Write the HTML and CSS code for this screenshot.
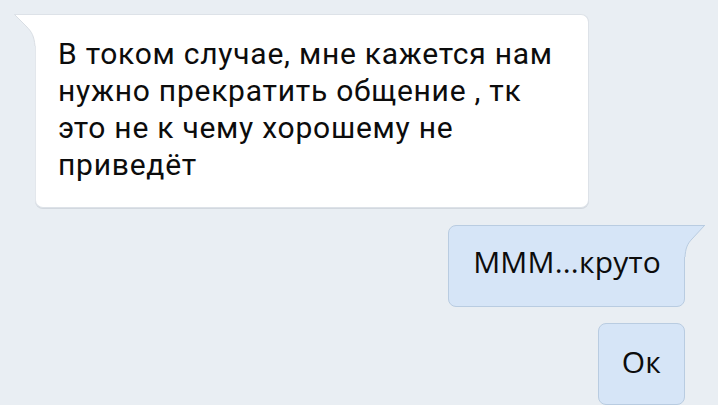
FILE: index.html
```html
<!DOCTYPE html>
<html lang="ru">
<head>
<meta charset="utf-8">
<link rel="stylesheet" href="styles.css">
</head>
<body>
<div class="chat">
  <div class="bubble in">
    <svg class="tail tail-in" width="22" height="32" viewBox="0 0 22 32">
      <path d="M0 0.5 H22 V32 H21 C20 22 18 18 12 12 L0.5 0.5 Z" fill="#ffffff"/>
      <path d="M0.5 0.5 L12 12 C18 18 20 22 21 32" fill="none" stroke="#d9dee4" stroke-width="1"/>
      <path d="M0 0.5 H22" stroke="#dde2e8" stroke-width="1"/>
    </svg>
    <p class="text roboto">В током случае, мне кажется нам<br>нужно прекратить общение , тк<br>это не к чему хорошему не<br>приведёт</p>
  </div>
  <div class="bubble out first">
    <svg class="tail tail-out" width="21" height="32" viewBox="0 0 21 32">
      <path d="M21 0.5 H0 V32 H1 C1.5 24 3 19 8 14 L20.5 0.5 Z" fill="#d6e5f7"/>
      <path d="M20.5 0.5 L8 14 C3 19 1.5 24 1 32" fill="none" stroke="#b9cce1" stroke-width="1"/>
      <path d="M0 0.5 H21" stroke="#b9cce1" stroke-width="1"/>
    </svg>
    <p class="text opensans">МММ...круто</p>
  </div>
  <div class="bubble out ok">
    <p class="text opensans">Ок</p>
  </div>
</div>
</body>
</html>
```
FILE: styles.css
```css
html, body {
  margin: 0;
  padding: 0;
  background: #e9eef3;
  overflow: hidden;
}
.chat {
  display: flex;
  flex-direction: column;
  align-items: flex-start;
  gap: 16px;
  padding: 14px 33px 0 35px;
  width: 718px;
  height: 405px;
  box-sizing: border-box;
}
.bubble {
  position: relative;
  box-sizing: border-box;
}
.text {
  margin: 0;
  color: #0c0c0c;
  white-space: nowrap;
}
.roboto {
  font-family: Roboto, "Noto Sans", sans-serif;
  font-size: 30px;
  letter-spacing: 0.75px;
  line-height: 37px;
}
.opensans {
  font-family: "Open Sans", "Noto Sans", sans-serif;
  font-size: 30px;
  letter-spacing: 0.2px;
  line-height: 40px;
}
.in {
  width: 554px;
  height: 194px;
  background: #ffffff;
  border: 1px solid #dde2e8;
  border-left-color: #e3e7ec;
  border-radius: 0 8px 8px 8px;
  box-shadow: 0 1px 0 #d2d8df;
  padding: 20px 20px 0 22px;
}
.out {
  align-self: flex-end;
  background: #d6e5f7;
  border: 1px solid #b9cce1;
  height: 82px;
}
.first {
  border-radius: 8px 0 8px 8px;
  padding: 16px 23px 0 24px;
  margin-top: 1px;
}
.ok {
  border-radius: 8px;
  padding: 18px 23px 0 23px;
}
.tail {
  position: absolute;
  top: -1px;
  display: block;
}
.tail-in {
  left: -22px;
}
.tail-out {
  right: -21px;
}
```
